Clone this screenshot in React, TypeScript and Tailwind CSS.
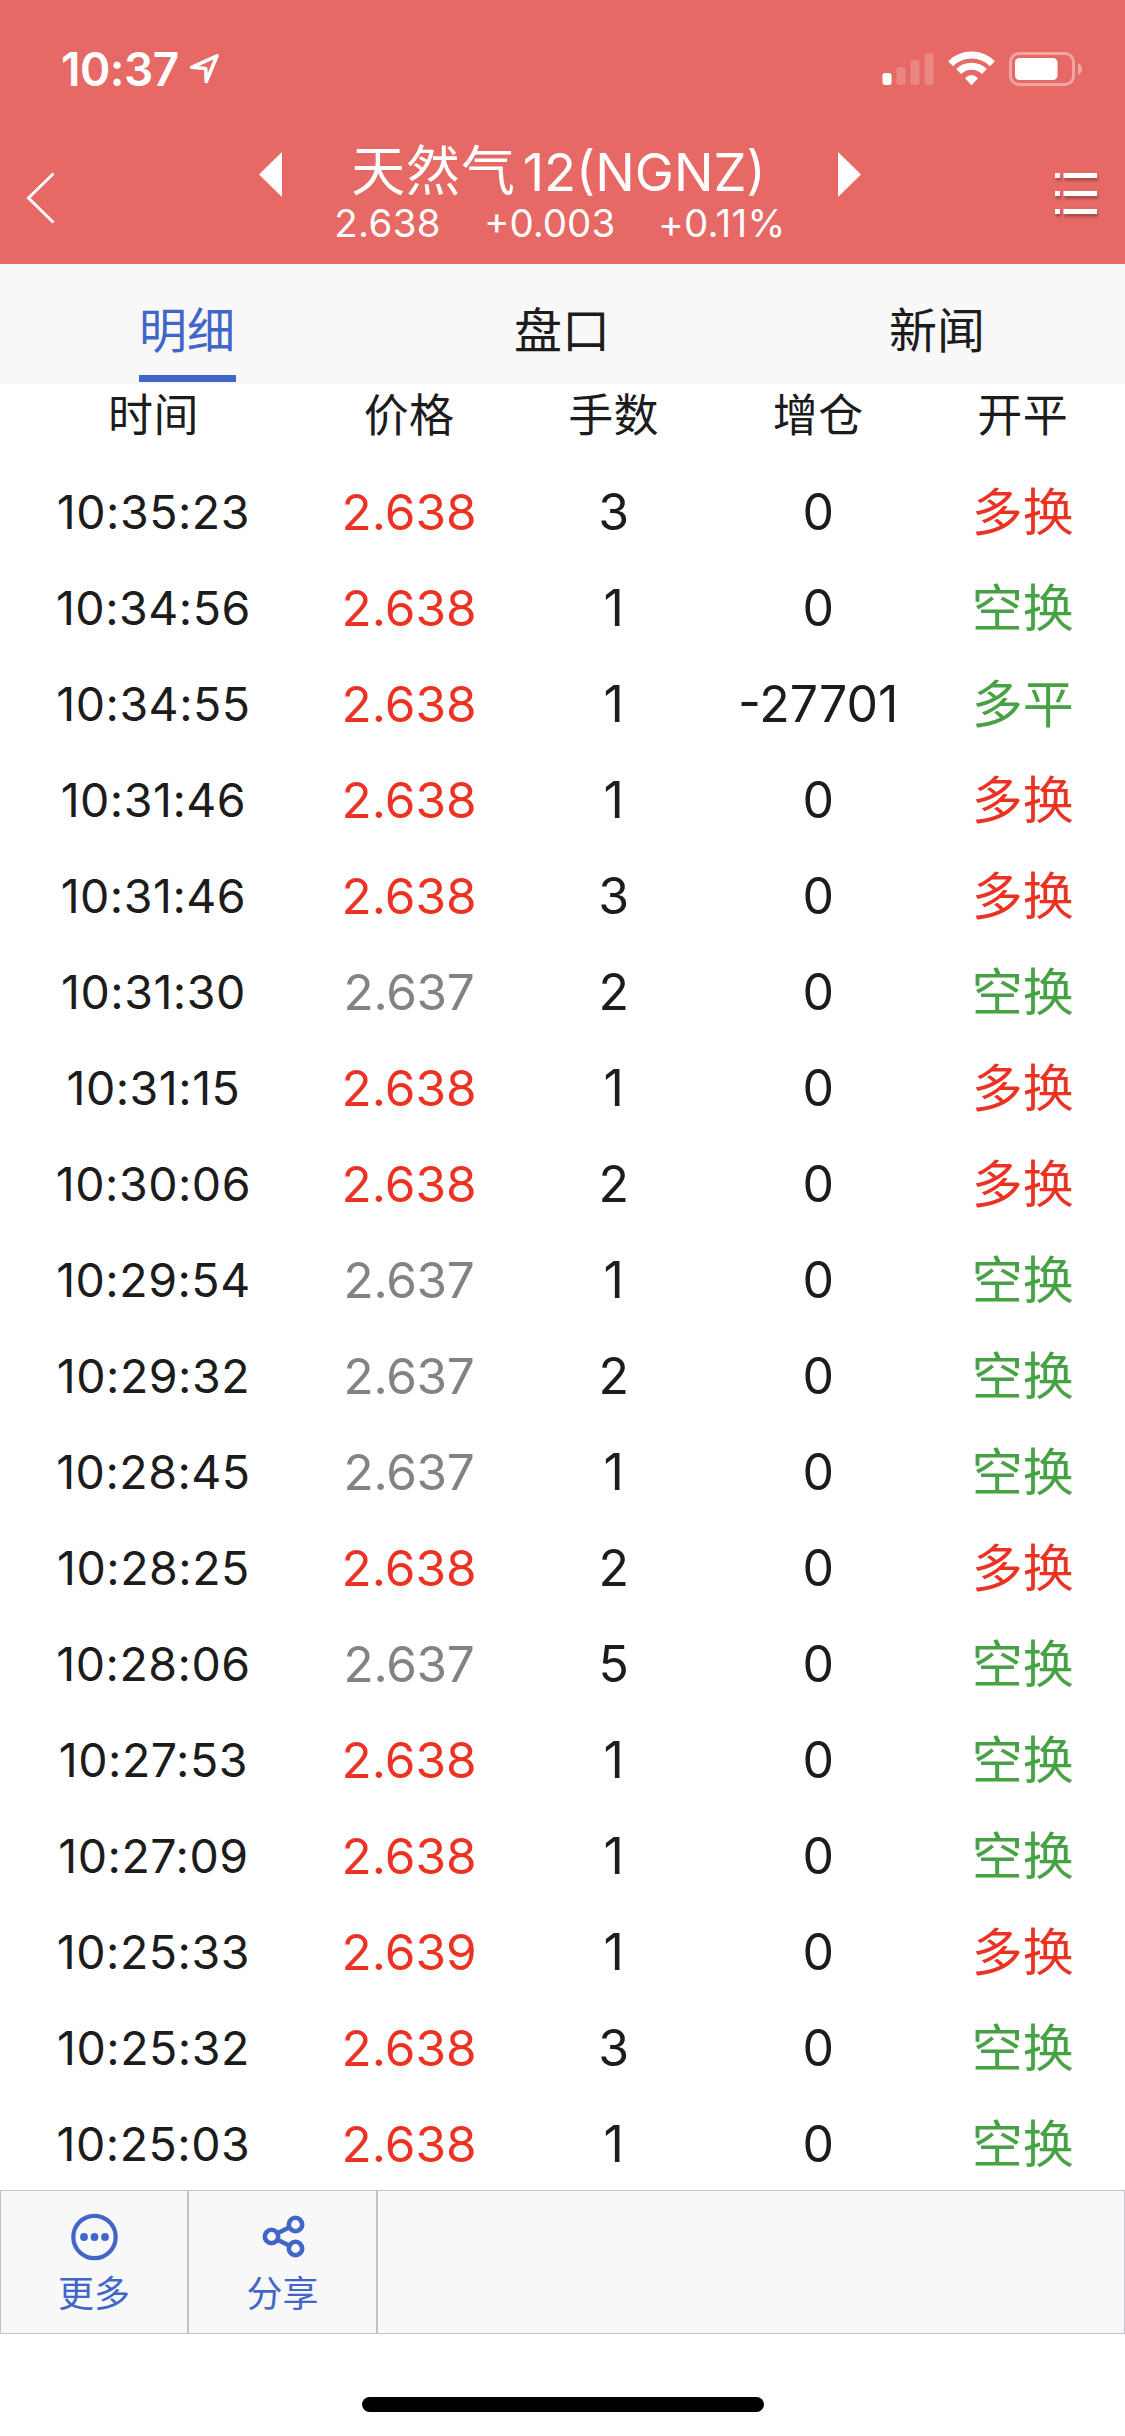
type Row = [time: string, price: string, lots: string, delta: string, kind: string, kindColor: 'r' | 'g'];

const rows: Row[] = [
  ['10:35:23', '2.638', '3', '0', '多换', 'r'],
  ['10:34:56', '2.638', '1', '0', '空换', 'g'],
  ['10:34:55', '2.638', '1', '-27701', '多平', 'g'],
  ['10:31:46', '2.638', '1', '0', '多换', 'r'],
  ['10:31:46', '2.638', '3', '0', '多换', 'r'],
  ['10:31:30', '2.637', '2', '0', '空换', 'g'],
  ['10:31:15', '2.638', '1', '0', '多换', 'r'],
  ['10:30:06', '2.638', '2', '0', '多换', 'r'],
  ['10:29:54', '2.637', '1', '0', '空换', 'g'],
  ['10:29:32', '2.637', '2', '0', '空换', 'g'],
  ['10:28:45', '2.637', '1', '0', '空换', 'g'],
  ['10:28:25', '2.638', '2', '0', '多换', 'r'],
  ['10:28:06', '2.637', '5', '0', '空换', 'g'],
  ['10:27:53', '2.638', '1', '0', '空换', 'g'],
  ['10:27:09', '2.638', '1', '0', '空换', 'g'],
  ['10:25:33', '2.639', '1', '0', '多换', 'r'],
  ['10:25:32', '2.638', '3', '0', '空换', 'g'],
  ['10:25:03', '2.638', '1', '0', '空换', 'g'],
];

const columns = ['时间', '价格', '手数', '增仓', '开平'];
const tabs = ['明细', '盘口', '新闻'];

function StatusBar() {
  return (
    <div className="flex h-[132px] items-start justify-between pt-[51px] pr-[41px] pl-[61px]">
      <div className="flex items-start">
        <span className="w-[126px] text-[46px] leading-[36px] font-semibold tracking-[-0.5px] whitespace-nowrap">10:37</span>
        <svg className="mt-[2px] ml-[2px]" width="32" height="33" viewBox="0 0 32 33" fill="none" stroke="currentColor" strokeWidth="3.6" strokeLinejoin="round">
          <path d="M2.600 14.300 L28 2.800 L17.300 28.500 L16.700 15.500 Z" />
        </svg>
      </div>
      <div className="flex items-start">
        <svg width="52" height="36" viewBox="0 0 52 36" fill="currentColor">
          <rect x="0.5" y="22" width="9" height="12" rx="2.5" />
          <g fillOpacity="0.2">
            <rect x="14.5" y="16" width="9" height="18" rx="2.5" />
            <rect x="28.5" y="9" width="9" height="25" rx="2.5" />
            <rect x="42.5" y="2" width="9" height="32" rx="2.5" />
          </g>
        </svg>
        <svg className="ml-[14px]" width="47" height="36" viewBox="0 0 47 36" fill="none" stroke="currentColor">
          <path d="M2.6 12.8 A29.5 29.5 0 0 1 44.4 12.8" strokeWidth="7" />
          <path d="M10.6 20.6 A18.5 18.5 0 0 1 36.4 20.6" strokeWidth="7" />
          <path d="M17 27.2 Q23.5 21 30 27.2 L23.5 34.2 Z" fill="currentColor" stroke="none" />
        </svg>
        <svg className="ml-[14px]" width="75" height="36" viewBox="0 0 75 36" fill="currentColor">
          <rect x="1.500" y="2.500" width="63" height="31" rx="8.500" fill="none" stroke="currentColor" strokeOpacity="0.4" strokeWidth="3" />
          <rect x="6" y="7" width="42.500" height="22" rx="4.500" />
          <path d="M69 12 Q73 14 73 18 Q73 22 69 24 Z" fillOpacity="0.4" />
        </svg>
      </div>
    </div>
  );
}

function NavBar() {
  return (
    <div className="flex h-[132px]">
      <svg className="mt-[39px] ml-[25px]" width="32" height="54" viewBox="0 0 32 54" fill="none" stroke="currentColor" strokeWidth="3">
        <path d="M28.500 2.500 L3.500 27 L28.500 51.500" />
      </svg>
      <div className="ml-[202px] flex w-[602px] items-start justify-between">
        <svg className="mt-5" width="24" height="46" viewBox="0 0 24 46" fill="currentColor">
          <path d="M23 0 V45 L0 22.500 Z" />
        </svg>
        <div className="flex flex-col items-center">
          <div className="mt-[10px] mr-[3px] flex h-[60px] items-center text-[52.500px] leading-[60px] whitespace-nowrap">
            <span className="text-[54px] tracking-[0.8px]">天然气</span>
            <span className="ml-[7px]">12(NGNZ)</span>
          </div>
          <div className="mt-[-2px] flex gap-[43px] text-[38.500px] leading-[46px] whitespace-nowrap">
            <span className="tracking-[0.3px]">2.638</span>
            <span>+0.003</span>
            <span className="tracking-[0.3px]">+0.11%</span>
          </div>
        </div>
        <svg className="mt-5" width="24" height="46" viewBox="0 0 24 46" fill="currentColor">
          <path d="M1 0 V45 L24 22.500 Z" />
        </svg>
      </div>
      <svg className="mt-[38px] ml-[194px] drop-shadow-[1px_3px_1px_rgba(0,0,0,0.25)]" width="48" height="48" viewBox="0 0 48 48" fill="currentColor">
        <path d="M0 3h5v5h-5z M8.500 3h33.500v5h-33.500z M0 21h5v5h-5z M8.500 21h33.500v5h-33.500z M0 39h5v5h-5z M8.500 39h33.500v5h-33.500z" />
      </svg>
    </div>
  );
}

function MoreIcon() {
  return (
    <svg width="48" height="48" viewBox="0 0 48 48" fill="currentColor">
      <circle cx="24.500" cy="24" r="21.2" fill="none" stroke="currentColor" strokeWidth="4.200" />
      <circle cx="14" cy="24" r="3.900" />
      <circle cx="24.500" cy="24" r="3.900" />
      <circle cx="35" cy="24" r="3.900" />
    </svg>
  );
}

function ShareIcon() {
  return (
    <svg width="48" height="48" viewBox="0 0 48 48" fill="none" stroke="currentColor" strokeWidth="4.600">
      <circle cx="12.500" cy="23.500" r="6.700" />
      <circle cx="36.500" cy="11.500" r="6.700" />
      <circle cx="36.500" cy="35.500" r="6.700" />
      <path d="M18.500 20.300 L30 14.500 M18.500 26.700 L30 32.500" />
    </svg>
  );
}

export default function App() {
  return (
    <div className="flex h-[2436px] w-[1125px] flex-col overflow-hidden bg-white font-['Inter','Noto_Sans_CJK_SC',sans-serif] text-[#1c1c1c]">
      <header className="h-[264px] bg-[#e66965] text-white">
        <StatusBar />
        <NavBar />
      </header>

      <nav className="grid h-[120px] grid-cols-3 bg-[#f8f8f8]">
        {tabs.map((tab, i) => (
          <div key={tab} className="flex justify-center">
            <div
              className={
                i === 0
                  ? 'mb-[2px] w-[97px] border-b-[7px] border-[#4166c8] pt-[31px] text-[48px] leading-[72px] whitespace-nowrap text-[#4166c8]'
                  : 'w-[97px] pt-[31px] text-[48px] leading-[72px] whitespace-nowrap'
              }
            >
              {tab}
            </div>
          </div>
        ))}
      </nav>

      <main className="h-[1806px]">
        <div className="grid h-[80px] grid-cols-[1.5fr_1fr_1fr_1fr_1fr] text-center text-[45px] leading-[64px] tracking-[0.4px]">
          {columns.map((c) => (
            <div key={c}>{c}</div>
          ))}
        </div>
        {rows.map(([time, price, lots, delta, kind, color], i) => (
          <div key={i} className="grid h-24 grid-cols-[1.5fr_1fr_1fr_1fr_1fr] text-center text-[50px] leading-[96px] whitespace-nowrap">
            <div className="text-[46.500px] tracking-[0.5px]">{time}</div>
            <div className={price === '2.637' ? 'text-[49.500px] tracking-[-0.3px] text-[#828287]' : 'text-[49.500px] text-[#eb3323]'}>{price}</div>
            <div>{lots}</div>
            <div>{delta}</div>
            <div className={color === 'r' ? 'text-[51px] leading-[97px] text-[#eb3323]' : 'text-[51px] leading-[97px] text-[#48a144]'}>{kind}</div>
          </div>
        ))}
      </main>

      <footer className="flex h-[144px] border-[1.500px] border-[#c0c4c9] bg-[#f8f8f8] text-[36px] leading-[44px] text-[#4166c8]">
        <div className="flex w-[188px] flex-col items-center border-r-2 border-[#c0c4c9] pt-[22px]">
          <MoreIcon />
          <span className="mt-[11px]">更多</span>
        </div>
        <div className="flex w-[189px] flex-col items-center border-r-2 border-[#c0c4c9] pt-[22px]">
          <ShareIcon />
          <span className="mt-[11px]">分享</span>
        </div>
      </footer>

      <div className="flex grow items-end justify-center pb-6">
        <div className="h-[15px] w-[402px] rounded-full bg-black" />
      </div>
    </div>
  );
}
